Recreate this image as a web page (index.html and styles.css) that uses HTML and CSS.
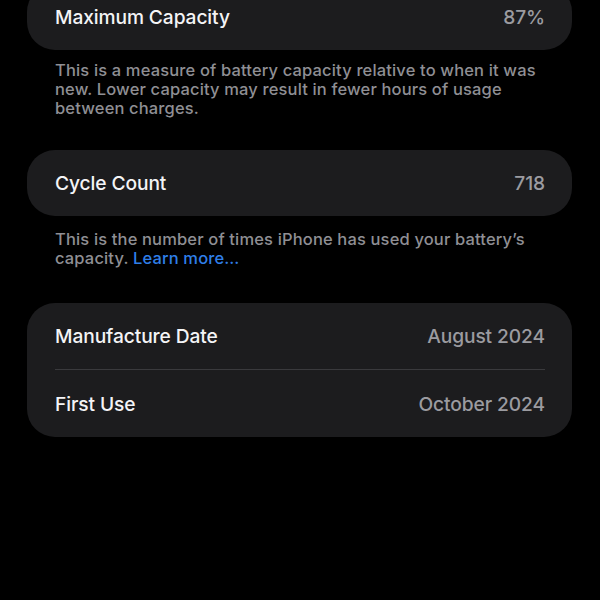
FILE: index.html
```html
<!DOCTYPE html>
<html lang="en">
<head>
<meta charset="utf-8">
<title>Battery Health</title>
<link rel="stylesheet" href="styles.css">
</head>
<body>
<main class="page">
  <section class="card">
    <div class="row"><span class="label">Maximum Capacity</span><span class="value">87%</span></div>
  </section>
  <p class="note">This is a measure of battery capacity relative to when it was new. Lower capacity may result in fewer hours of usage between charges.</p>

  <section class="card">
    <div class="row"><span class="label">Cycle Count</span><span class="value">718</span></div>
  </section>
  <p class="note note-short">This is the number of times iPhone has used your battery’s capacity. <a class="link" href="#">Learn more…</a></p>

  <section class="card">
    <div class="row"><span class="label">Manufacture Date</span><span class="value">August 2024</span></div>
    <div class="divider"></div>
    <div class="row"><span class="label">First Use</span><span class="value">October 2024</span></div>
  </section>
</main>
</body>
</html>
```

FILE: styles.css
```css
html, body {
  margin: 0;
  padding: 0;
  background: #000;
}

body {
  font-family: Inter, "Noto Sans", "Liberation Sans", sans-serif;
  color: #fff;
  -webkit-font-smoothing: antialiased;
}

.page {
  display: flex;
  flex-direction: column;
  margin-top: -16px;
  padding: 0 28px 0 27px;
}

.card {
  background: #1c1c1e;
  border-radius: 28px;
  padding: 0 27px 0 28px;
}

.row {
  height: 66px;
  display: flex;
  align-items: center;
  justify-content: space-between;
  font-size: 19.2px;
  font-weight: 500;
  letter-spacing: -0.1px;
}

.row + .divider + .row {
  height: 67px;
}

.label {
  color: #f4f4f6;
}

.value {
  color: #9b9ba0;
  font-weight: 500;
}

.divider {
  height: 1px;
  background: #3a3a3d;
}

.note {
  margin: 11px 0 32px;
  padding: 0 22px 0 28px;
  font-size: 16.5px;
  line-height: 19px;
  letter-spacing: 0.15px;
  color: #8f8f94;
  font-weight: 500;
}

.note-short {
  margin-top: 14px;
  margin-bottom: 35px;
}

.link {
  color: #2f7fe8;
  text-decoration: none;
}
```
